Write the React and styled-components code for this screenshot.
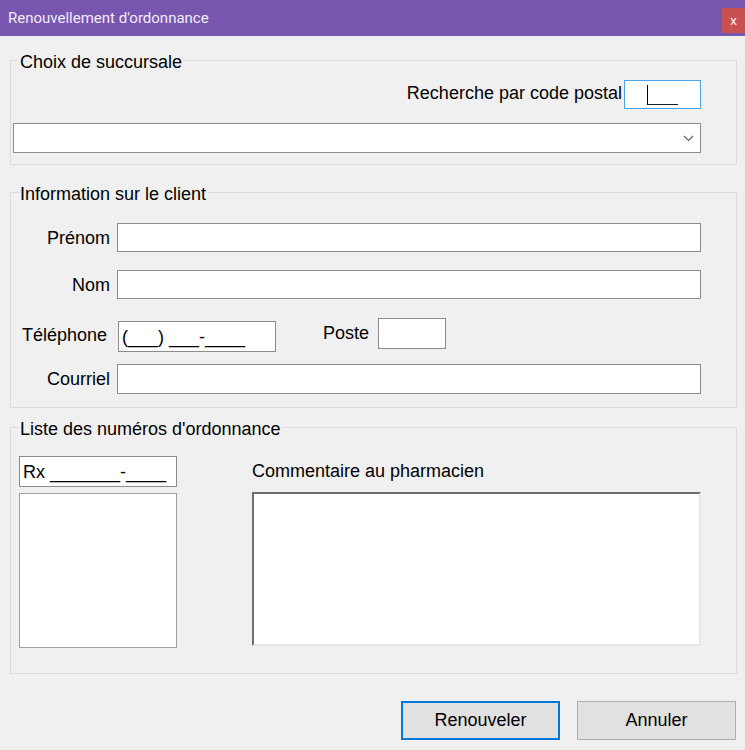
import styled, { createGlobalStyle } from "styled-components";

const Global = createGlobalStyle`
  html, body {
    margin: 0;
    padding: 0;
    background: #f0f0f0;
  }
  body {
    font-family: "Liberation Sans", Arial, sans-serif;
    font-size: 18px;
    color: #000;
  }
`;

const Window = styled.div`
  width: 745px;
  height: 750px;
  display: flex;
  flex-direction: column;
  background: #f0f0f0;
  overflow: hidden;
`;

const TitleBar = styled.div`
  height: 36px;
  background: #7856af;
  display: flex;
  align-items: flex-start;
  justify-content: space-between;
  flex-shrink: 0;
`;

const Title = styled.div`
  font-family: Roboto, "Liberation Sans", sans-serif;
  font-size: 15px;
  color: #f1ecf8;
  padding-left: 8px;
  line-height: 36px;
`;

const CloseBtn = styled.div`
  margin-top: 8px;
  width: 23px;
  height: 25px;
  background: #c75050;
  color: #fff;
  font-family: "Liberation Sans", Arial, sans-serif;
  font-size: 13px;
  display: flex;
  align-items: center;
  justify-content: center;
`;

const Body = styled.div`
  padding: 12px 8px 0 10px;
  display: flex;
  flex-direction: column;
`;

const Group = styled.fieldset`
  margin: ${(p) => p.$mt || 0}px 0 0 0;
  padding: 0;
  border: 1px solid #dcdcdc;
  min-width: 0;
`;

const Legend = styled.legend`
  margin-left: 8px;
  padding: 4px 1px 0 1px;
  line-height: 20px;
  font-size: 18px;
`;

const GroupInner = styled.div`
  padding: ${(p) => p.$pad};
  display: flex;
  flex-direction: column;
`;

const PostalRow = styled.div`
  display: flex;
  justify-content: flex-end;
  align-items: center;
  height: 29px;
  gap: 2px;
`;

const Label = styled.span`
  white-space: nowrap;
  line-height: 20px;
  margin-top: -3px;
`;

const PostalBox = styled.div`
  height: 27px;
  border: 1px solid #4da3ea;
  background: #fff;
  display: flex;
  align-items: center;
  padding-left: 22px;
  box-sizing: content-box;
  width: 53px;
`;

const Caret = styled.span`
  display: inline-block;
  height: 19px;
  width: 30px;
  border-left: 1px solid #000;
  border-bottom: 1px solid #222;
  margin-top: 1px;
`;

const Combo = styled.div`
  margin-top: 14px;
  height: 28px;
  border: 1px solid #8c8c8c;
  background: #fff;
  display: flex;
  align-items: center;
  justify-content: flex-end;
  padding-right: 6px;
`;

const Row = styled.div`
  display: flex;
  align-items: ${(p) => p.$align || "center"};
  margin-top: ${(p) => p.$mt || 0}px;
  height: ${(p) => p.$h || 29}px;
`;

const FieldLabel = styled.span`
  width: 100px;
  text-align: right;
  padding-right: ${(p) => p.$pr || 0}px;
  box-sizing: border-box;
  margin-right: 7px;
  white-space: nowrap;
  align-self: center;
  line-height: 20px;
`;

const TextBox = styled.div`
  width: ${(p) => p.$w}px;
  height: ${(p) => p.$h || 29}px;
  box-sizing: border-box;
  border: 1px solid #8c8c8c;
  background: #fff;
  display: flex;
  align-items: center;
  padding-left: 3px;
  white-space: nowrap;
  overflow: hidden;
  align-self: ${(p) => p.$self || "auto"};
  flex-shrink: 0;
  line-height: 20px;
`;

const InlineLabel = styled.span`
  margin-left: ${(p) => p.$ml}px;
  margin-right: 9px;
  white-space: nowrap;
  align-self: center;
  margin-top: -4px;
  line-height: 20px;
`;

const ListArea = styled.div`
  display: flex;
  gap: 75px;
`;

const Column = styled.div`
  display: flex;
  flex-direction: column;
`;

const ListBox = styled.div`
  margin-top: 6px;
  width: 158px;
  height: 155px;
  box-sizing: border-box;
  border: 1px solid #a0a0a8;
  background: #fff;
`;

const CommentLabel = styled.div`
  height: 31px;
  display: flex;
  align-items: center;
  margin-top: 0;
  margin-bottom: 5px;
`;

const TextArea = styled.div`
  width: 449px;
  height: 154px;
  box-sizing: border-box;
  background: #fff;
  border-top: 2px solid #6e6e6e;
  border-left: 2px solid #6e6e6e;
  border-right: 2px solid #e6e6e6;
  border-bottom: 2px solid #e6e6e6;
`;

const ButtonRow = styled.div`
  margin-top: 27px;
  display: flex;
  justify-content: flex-end;
  gap: 17px;
  padding-right: 1px;
`;

const Button = styled.div`
  width: 159px;
  height: 39px;
  box-sizing: border-box;
  background: #e1e1e1;
  border: ${(p) => (p.$primary ? "2px solid #0078d7" : "1px solid #adadad")};
  display: flex;
  align-items: center;
  justify-content: center;
  font-size: 18px;
`;

function Chevron() {
  return (
    <svg width="11" height="7" viewBox="0 0 11 7">
      <path d="M1 1 L5.5 5.5 L10 1" fill="none" stroke="#606060" strokeWidth="1.2" />
    </svg>
  );
}

export default function App() {
  return (
    <Window>
      <Global />
      <TitleBar>
        <Title>Renouvellement d'ordonnance</Title>
        <CloseBtn>x</CloseBtn>
      </TitleBar>
      <Body>
        <Group>
          <Legend>Choix de succursale</Legend>
          <GroupInner $pad="8px 35px 11px 2px">
            <PostalRow>
              <Label>Recherche par code postal</Label>
              <PostalBox>
                <Caret />
              </PostalBox>
            </PostalRow>
            <Combo>
              <Chevron />
            </Combo>
          </GroupInner>
        </Group>

        <Group $mt={15}>
          <Legend>Information sur le client</Legend>
          <GroupInner $pad="19px 35px 13px 0">
            <Row>
              <FieldLabel>Prénom</FieldLabel>
              <TextBox $w={584} />
            </Row>
            <Row $mt={18}>
              <FieldLabel>Nom</FieldLabel>
              <TextBox $w={584} />
            </Row>
            <Row $mt={19} $h={34} $align="flex-start">
              <FieldLabel $pr={4}>Téléphone</FieldLabel>
              <TextBox $w={158} $h={31} $self="flex-end">(___) ___-____</TextBox>
              <InlineLabel $ml={47}>Poste</InlineLabel>
              <TextBox $w={68} $h={31} $self="flex-start" />
            </Row>
            <Row $mt={12} $h={30}>
              <FieldLabel>Courriel</FieldLabel>
              <TextBox $w={584} $h={30} />
            </Row>
          </GroupInner>
        </Group>

        <Group $mt={7}>
          <Legend>Liste des numéros d'ordonnance</Legend>
          <GroupInner $pad="17px 0 25px 8px">
            <ListArea>
              <Column>
                <TextBox $w={158} $h={31}>Rx _______-____</TextBox>
                <ListBox />
              </Column>
              <Column>
                <CommentLabel>Commentaire au pharmacien</CommentLabel>
                <TextArea />
              </Column>
            </ListArea>
          </GroupInner>
        </Group>

        <ButtonRow>
          <Button $primary>Renouveler</Button>
          <Button>Annuler</Button>
        </ButtonRow>
      </Body>
    </Window>
  );
}
